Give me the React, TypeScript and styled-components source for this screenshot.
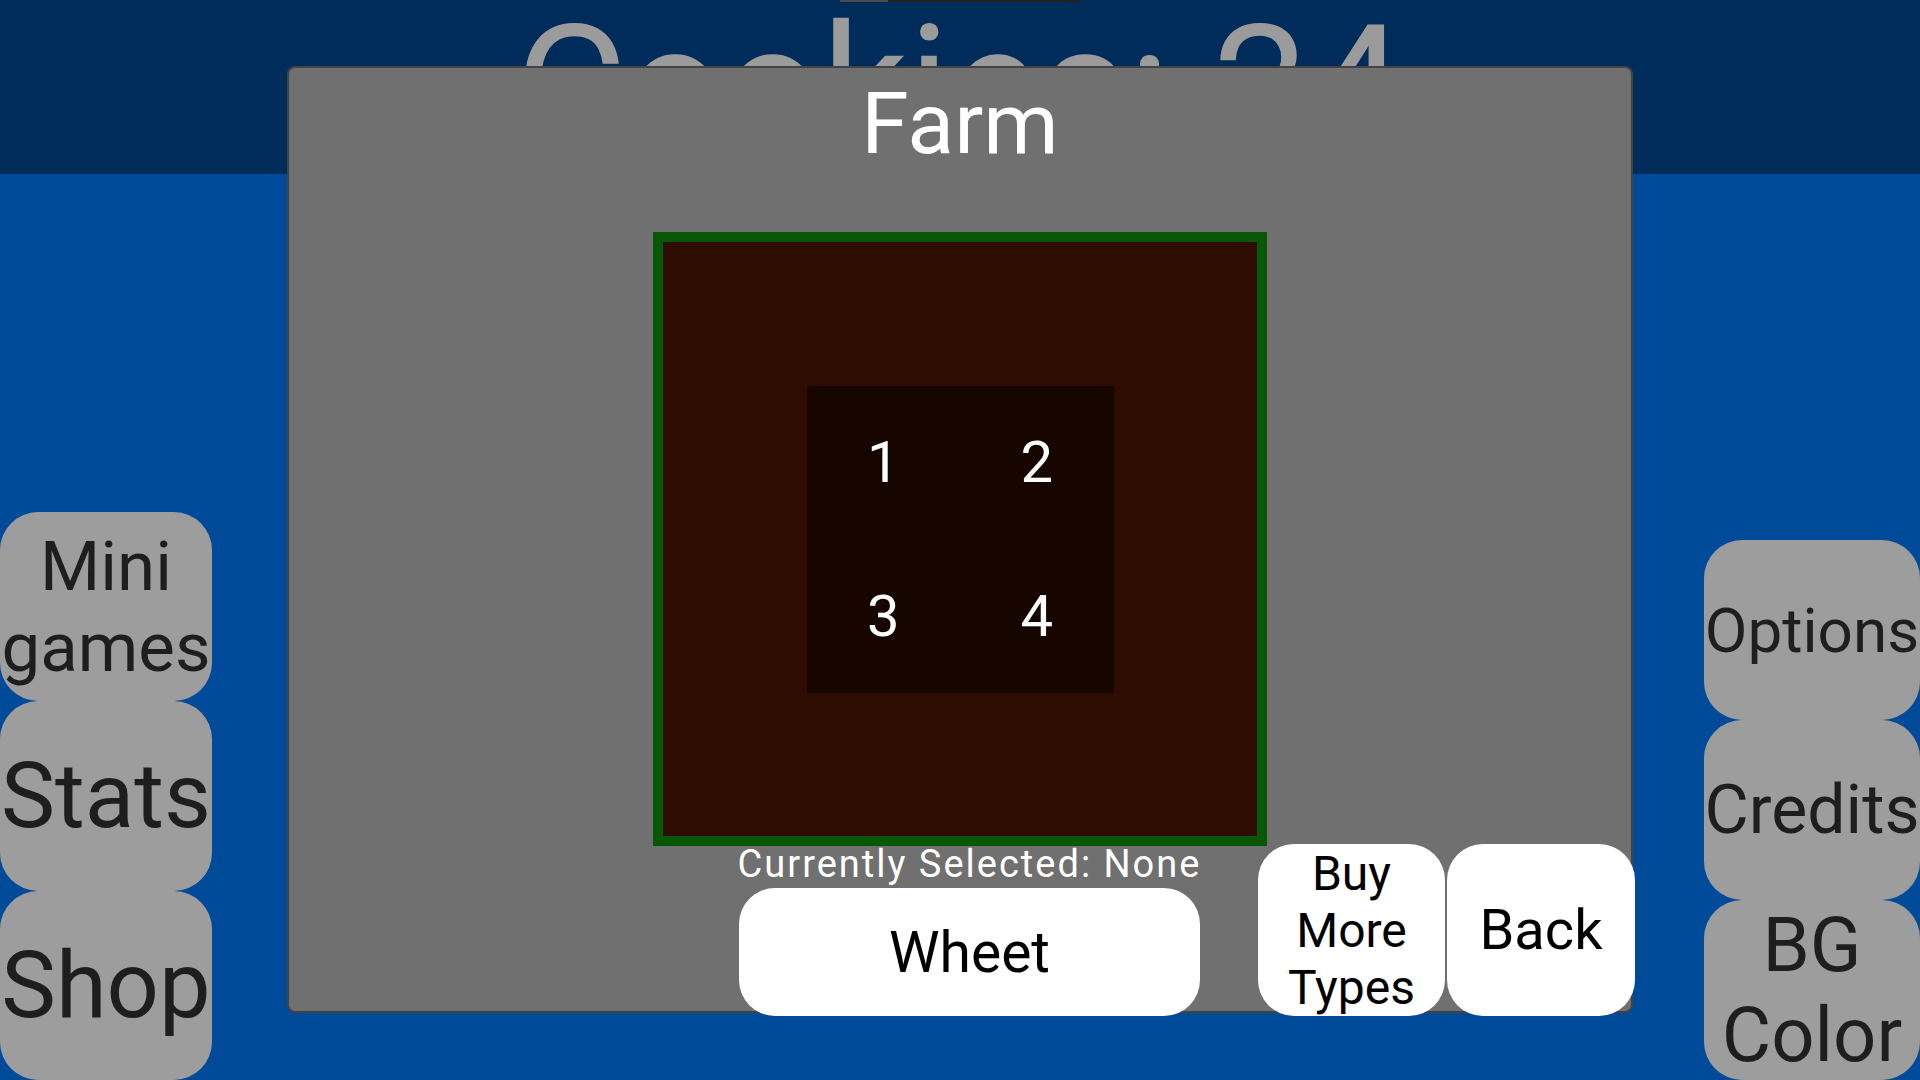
import React from "react";
import styled, { createGlobalStyle } from "styled-components";

const GlobalStyle = createGlobalStyle`
  html, body {
    margin: 0;
    padding: 0;
    overflow: hidden;
    background: #004a9a;
  }
  * { box-sizing: border-box; }
`;

const Screen = styled.div`
  position: relative;
  width: 1920px;
  height: 1080px;
  display: flex;
  flex-direction: column;
  background: #004a9a;
  font-family: Roboto, "Noto Sans", sans-serif;
  overflow: hidden;
`;

const Header = styled.header`
  position: relative;
  height: 174px;
  flex-shrink: 0;
  background: #002c5c;
  display: flex;
  align-items: center;
  justify-content: center;
`;

const Notch = styled.div`
  position: absolute;
  top: 0;
  left: 840px;
  width: 242px;
  height: 2px;
  display: flex;
  background: #222222;
`;

const NotchFill = styled.div`
  width: 48px;
  height: 100%;
  background: #4c4c4c;
`;

const CookieCount = styled.h1`
  margin: 0;
  font-size: 171px;
  font-weight: 400;
  line-height: normal;
  color: #9b9b9b;
  white-space: nowrap;
`;

const Main = styled.main`
  flex: 1;
  display: flex;
  justify-content: space-between;
  align-items: flex-end;
`;

const SideColumn = styled.nav<{ $width: number; $height: number }>`
  width: ${(p) => p.$width}px;
  height: ${(p) => p.$height}px;
  display: flex;
  flex-direction: column;
`;

const SideButton = styled.button<{ $size: number }>`
  flex: 1;
  border: none;
  padding: 0;
  margin: 0;
  border-radius: 38px;
  background: #9d9d9d;
  color: #1e1e1e;
  font-family: Roboto, "Noto Sans", sans-serif;
  font-size: ${(p) => p.$size}px;
  line-height: normal;
  display: flex;
  align-items: center;
  justify-content: center;
  text-align: center;
  white-space: nowrap;
`;

const Panel = styled.section`
  position: absolute;
  left: 287px;
  top: 66px;
  width: 1346px;
  height: 947px;
  background: #707070;
  border: 2px solid #434343;
  border-radius: 8px;
  display: flex;
  flex-direction: column;
  align-items: center;
`;

const PanelTitle = styled.h2`
  margin: 6px 0 0;
  font-size: 86px;
  font-weight: 400;
  line-height: 100px;
  color: #ffffff;
`;

const Field = styled.div`
  margin-top: 58px;
  width: 614px;
  height: 614px;
  flex-shrink: 0;
  border: 10px solid #065806;
  background: #2f0c01;
  display: flex;
  align-items: center;
  justify-content: center;
`;

const Plot = styled.div`
  width: 307px;
  height: 307px;
  background: #170500;
  display: grid;
  grid-template-columns: 1fr 1fr;
  grid-template-rows: 1fr 1fr;
`;

const PlotCell = styled.div`
  display: flex;
  align-items: center;
  justify-content: center;
  color: #ffffff;
  font-size: 58px;
  line-height: normal;
`;

const ActionRow = styled.div`
  align-self: stretch;
  margin-top: -3px;
  padding-left: 450px;
  display: flex;
  align-items: flex-end;
`;

const SelectColumn = styled.div`
  width: 461px;
  flex-shrink: 0;
  display: flex;
  flex-direction: column;
  align-items: center;
  gap: 3px;
`;

const SelectedLabel = styled.div`
  height: 42px;
  font-size: 38px;
  line-height: 42px;
  letter-spacing: 2px;
  color: #ffffff;
  white-space: nowrap;
`;

const WhiteButton = styled.button<{ $width: number; $height: number; $size: number; $gap?: number }>`
  width: ${(p) => p.$width}px;
  height: ${(p) => p.$height}px;
  flex-shrink: 0;
  margin: 0 0 0 ${(p) => p.$gap ?? 0}px;
  padding: 0;
  border: none;
  border-radius: 36px;
  background: #ffffff;
  color: #000000;
  font-family: Roboto, "Noto Sans", sans-serif;
  font-size: ${(p) => p.$size}px;
  line-height: normal;
  display: flex;
  align-items: center;
  justify-content: center;
  text-align: center;
`;

export default function App() {
  return (
    <>
      <GlobalStyle />
      <Screen>
        <Header>
          <Notch>
            <NotchFill />
          </Notch>
          <CookieCount>Cookies: 24</CookieCount>
        </Header>
        <Main>
          <SideColumn $width={212} $height={568}>
            <SideButton $size={69}>
              Mini
              <br />
              games
            </SideButton>
            <SideButton $size={91}>Stats</SideButton>
            <SideButton $size={92}>Shop</SideButton>
          </SideColumn>
          <SideColumn $width={216} $height={540}>
            <SideButton $size={62}>Options</SideButton>
            <SideButton $size={68}>Credits</SideButton>
            <SideButton $size={76}>
              BG
              <br />
              Color
            </SideButton>
          </SideColumn>
        </Main>
        <Panel>
          <PanelTitle>Farm</PanelTitle>
          <Field>
            <Plot>
              {[1, 2, 3, 4].map((n) => (
                <PlotCell key={n}>{n}</PlotCell>
              ))}
            </Plot>
          </Field>
          <ActionRow>
            <SelectColumn>
              <SelectedLabel>Currently Selected: None</SelectedLabel>
              <WhiteButton $width={461} $height={128} $size={57}>
                Wheet
              </WhiteButton>
            </SelectColumn>
            <WhiteButton $width={187} $height={172} $size={48} $gap={58}>
              Buy
              <br />
              More
              <br />
              Types
            </WhiteButton>
            <WhiteButton $width={188} $height={172} $size={56} $gap={2}>
              Back
            </WhiteButton>
          </ActionRow>
        </Panel>
      </Screen>
    </>
  );
}
